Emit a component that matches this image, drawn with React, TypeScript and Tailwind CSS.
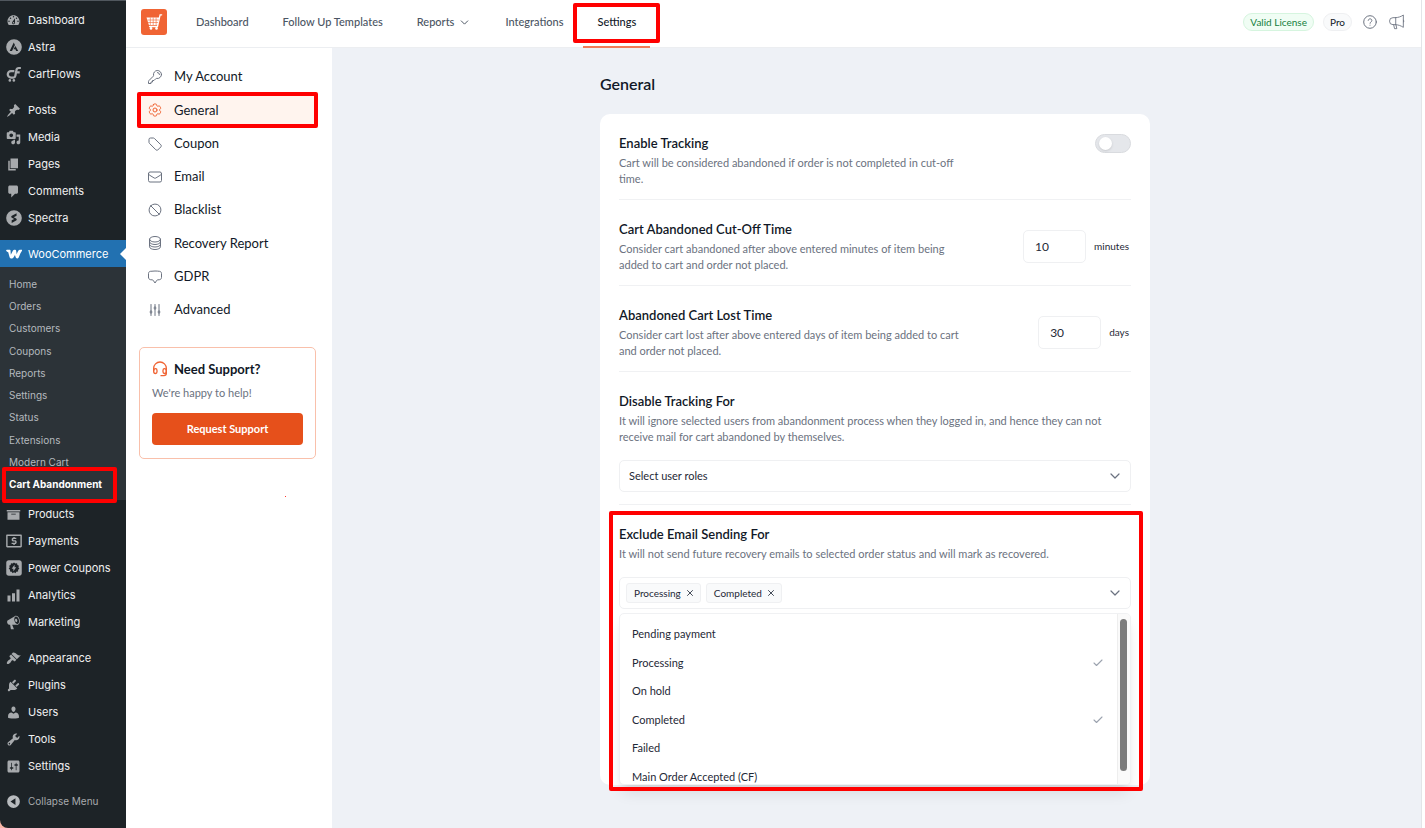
import { useState, type ReactNode } from "react";
import clsx from "clsx";
import { Check, ChevronDown, X } from "lucide-react";
import {
  HiOutlineAdjustmentsVertical,
  HiOutlineChatBubbleBottomCenter,
  HiOutlineCircleStack,
  HiOutlineCog6Tooth,
  HiOutlineEnvelope,
  HiOutlineKey,
  HiOutlineNoSymbol,
} from "react-icons/hi2";

const ICONS: Record<string, ReactNode> = {
  dashboard: (
    <path
      fillRule="evenodd"
      d="M3.76 16h12.48c1.1-1.37 1.76-3.11 1.76-5 0-4.42-3.58-8-8-8s-8 3.58-8 8c0 1.89.66 3.63 1.76 5zM10 4c.55 0 1 .45 1 1s-.45 1-1 1-1-.45-1-1 .45-1 1-1zM6 6c.55 0 1 .45 1 1s-.45 1-1 1-1-.45-1-1 .45-1 1-1zm8 0c.55 0 1 .45 1 1s-.45 1-1 1-1-.45-1-1 .45-1 1-1zm-5.37 5.55L12 7v6c0 1.1-.9 2-2 2s-2-.9-2-2c0-.57.24-1.08.63-1.45zM4 10c.55 0 1 .45 1 1s-.45 1-1 1-1-.45-1-1 .45-1 1-1zm12 0c.55 0 1 .45 1 1s-.45 1-1 1-1-.45-1-1 .45-1 1-1zm-5 3c0-.55-.45-1-1-1s-1 .45-1 1 .45 1 1 1 1-.45 1-1z"
    />
  ),
  astra: (
    <path
      fillRule="evenodd"
      d="M10 .2a9.8 9.8 0 1 0 0 19.6A9.8 9.8 0 0 0 10 .2zM9.7 4.4l1.5 3-3.7 7.6H4.6zM11.8 8.6l3.5 6.4h-2.6l-1-2.1H9.3z"
    />
  ),
  cartflows: (
    <>
      <path
        fill="none"
        stroke="currentColor"
        strokeWidth="2.8"
        d="M10.5 6.4H6.2a4 4 0 0 0 0 8h3c1.500 0 2.200-.7 2.500-2.200L13 5.300c.3-1.900 1.300-2.800 3-2.800h2.600M12.500 8h4.600"
      />
      <circle cx="4.800" cy="18" r="1.600" />
      <circle cx="9.800" cy="18" r="1.600" />
    </>
  ),
  posts: (
    <path d="M10.44 3.02l1.82-1.82 6.36 6.35-1.83 1.82c-1.05-.68-2.48-.57-3.41.36l-.75.75c-.92.93-1.04 2.35-.35 3.41l-1.83 1.82-2.41-2.41-2.8 2.79c-.42.42-3.38 2.71-3.8 2.29s1.86-3.39 2.28-3.81l2.79-2.79L4.1 9.36l1.83-1.82c1.05.69 2.48.57 3.4-.36l.75-.75c.93-.92 1.05-2.35.36-3.41z" />
  ),
  media: (
    <path
      fillRule="evenodd"
      d="M13 11V4c0-.55-.45-1-1-1h-1.67L9 1H5L3.67 3H2c-.55 0-1 .45-1 1v7c0 .55.45 1 1 1h10c.55 0 1-.45 1-1zM7 4.5c1.38 0 2.5 1.12 2.5 2.5S8.38 9.5 7 9.5 4.5 8.38 4.5 7 5.62 4.5 7 4.5zM14 6h5v10.5c0 1.38-1.12 2.5-2.5 2.5S14 17.88 14 16.5s1.12-2.5 2.5-2.5c.17 0 .34.02.5.05V9h-3V6zm-4 8.05V13h2v3.5c0 1.38-1.12 2.5-2.5 2.5S7 17.88 7 16.5 8.12 14 9.5 14c.17 0 .34.02.5.05z"
    />
  ),
  pages: <path d="M6 15V2h10v13H6zm-1 1h8v2H3V5h2v11z" />,
  comments: <path d="M5 2h9c1.1 0 2 .9 2 2v7c0 1.1-.9 2-2 2h-2l-5 5v-5H5c-1.1 0-2-.9-2-2V4c0-1.1.9-2 2-2z" />,
  spectra: (
    <path
      fillRule="evenodd"
      d="M10 .2a9.8 9.8 0 1 0 0 19.6A9.8 9.8 0 0 0 10 .2zM13.2 4.2v3.1L9.7 9.1l3 1.5c1 .6 1 1.9 0 2.5l-5.6 3v-3.2l3.2-1.7-3-1.5c-1-.6-1.1-2 0-2.6z"
    />
  ),
  woo: (
    <path d="M1.2 4.6h3.2c.9 0 1.3.5 1.3 1.3l.3 4.9 2.6-4.9c.5-.9 1-1.3 1.9-1.3h.9c.8 0 1.2.4 1.3 1.2l.6 4.4c.8-1.9 1.5-3.5 2.5-4.9.4-.5.8-.7 1.4-.7h2.300c.7 0 1 .6.6 1.2-1.900 2.700-3.100 5.500-4.100 8.400-.3.900-.8 1.300-1.700 1.300h-.5c-.9 0-1.400-.5-1.700-1.300l-.9-3-1.600 3c-.5.900-1 1.300-1.900 1.300H6.100c-.9 0-1.400-.5-1.600-1.300L2.800 7.800C1.800 7.500.9 7 .4 6.100-.1 5.300.3 4.600 1.200 4.600z" />
  ),
  products: <path fillRule="evenodd" d="M19 4v2H1V4h18zM2 7h16v10H2V7zm11 3V9H7v1h6z" />,
  payments: (
    <path
      fillRule="evenodd"
      d="M1.5 2h17c.8 0 1.300.5 1.300 1.300v13.400c0 .8-.5 1.300-1.300 1.300h-17C.7 18 .2 17.500.2 16.700V3.300C.2 2.500.7 2 1.500 2zM2 3.800v12.400h16V3.800zM9.200 5h1.700v1h2v1.600H9.100v1.500h2.300c1.200 0 1.900.7 1.900 1.900v1c0 1.100-.7 1.900-1.900 1.900h-.5v1H9.200v-1H7v-1.600h4.400v-1.600H9c-1.200 0-1.900-.7-1.900-1.800V7.800c0-1.100.8-1.800 1.900-1.800h.2z"
    />
  ),
  powerCoupons: (
    <path
      fillRule="evenodd"
      d="M3.500.3h13c1.900 0 3.200 1.300 3.200 3.200v13c0 1.900-1.300 3.200-3.200 3.200h-13c-1.900 0-3.200-1.300-3.200-3.200v-13C.3 1.600 1.600.3 3.500.3zM10 3L8.300 4.300l-2.100-.2-.4 2.100-1.900 1L4.700 9.100 3.400 11l1.700 1.300-.1 2.200 2.100.2 1.200 1.800L10 15.300l1.800 1.200 1.100-1.800 2.200-.2v-2.200l1.600-1.400-1.200-1.800.7-2-1.900-.9-.5-2.100-2.100.2zM10.700 6v3h2.100l-3.600 5v-3.200H7.100z"
    />
  ),
  analytics: <path d="M18 18V2h-4v16h4zm-6 0V7H8v11h4zm-6 0v-8H2v8h4z" />,
  marketing: (
    <path
      fillRule="evenodd"
      d="M18.15 5.94c.46 1.62.38 3.22-.02 4.48-.42 1.28-1.26 2.18-2.3 2.48-.16.06-.26.06-.4.06-.06.02-.12.02-.18.02-.06.02-.14.02-.22.02h-6.8l2.22 5.5c.02.14-.06.26-.14.34-.08.1-.24.16-.34.16H6.95c-.1 0-.26-.06-.34-.16-.08-.08-.16-.2-.14-.34l-1-5.5H4.25l-.02-.02c-.5.06-1.08-.18-1.54-.62s-.88-1.08-1.06-1.88c-.24-.8-.2-1.56-.02-2.2.18-.62.58-1.08 1.06-1.3l.02-.02 9-5.4c.1-.06.18-.1.24-.16.06-.04.14-.08.24-.12.16-.08.28-.12.5-.18 1.04-.3 2.24.1 3.22.98s1.84 2.24 2.26 3.86zm-2.58 5.98h-.02c.4-.1.74-.34 1.04-.7.58-.7.86-1.76.86-3.04 0-.64-.1-1.3-.28-1.98-.34-1.36-1.02-2.5-1.78-3.24s-1.68-1.1-2.46-.88c-.82.22-1.4.96-1.7 2-.32 1.04-.28 2.36.06 3.72.38 1.36 1 2.5 1.8 3.24.78.74 1.62 1.1 2.48.88zm-2.54-7.08c.22-.04.42-.02.62.04.38.16.76.48 1.02 1s.42 1.2.42 1.78c0 .3-.04.56-.12.8-.18.48-.44.84-.86.94-.34.1-.8-.06-1.14-.4s-.64-.86-.78-1.5c-.18-.62-.12-1.24.02-1.72s.48-.84.82-.94z"
    />
  ),
  appearance: (
    <path d="M14.48 11.06L7.41 3.99l1.5-1.5c.5-.56 2.3-.47 3.51.32 1.21.8 1.43 1.28 2.91 2.1 1.18.64 2.45 1.26 4.45.85zm-.71.71L6.7 4.7 4.93 6.47c-.39.39-.39 1.02 0 1.41l1.06 1.06c.39.39.39 1.03 0 1.42-.6.6-1.43 1.11-2.21 1.69-.35.26-.7.53-1.01.84C1.43 14.23.4 16.08 1.4 17.07c.99 1 2.84-.03 4.18-1.36.31-.31.58-.66.85-1.02.57-.78 1.08-1.61 1.69-2.21.39-.39 1.02-.39 1.41 0l1.06 1.06c.39.39 1.02.39 1.41 0z" />
  ),
  plugins: (
    <path d="M13.11 4.36L9.87 7.6 8 5.73l3.24-3.24c.35-.34 1.05-.2 1.56.32.52.51.66 1.21.31 1.55zm-8 1.77l.91-1.12 9.01 9.01-1.19.84c-.71.71-2.63 1.16-3.82 1.16H6.14L4.9 17.26c-.59.59-1.54.59-2.12 0-.59-.58-.59-1.53 0-2.12l1.24-1.24v-3.88c0-1.13.4-3.19 1.09-3.89zm7.26 3.97l3.24-3.24c.34-.35 1.04-.21 1.55.31.52.51.66 1.21.31 1.55l-3.24 3.25z" />
  ),
  users: (
    <path d="M10 9.25c-2.27 0-2.73-3.44-2.73-3.44C7 4.02 7.82 2 9.97 2c2.16 0 2.98 2.02 2.71 3.81 0 0-.41 3.44-2.68 3.44zm0 2.57L12.72 10c2.39 0 4.52 2.33 4.52 4.53v2.49s-3.65 1.13-7.24 1.13c-3.65 0-7.24-1.13-7.24-1.13v-2.49c0-2.25 1.94-4.48 4.47-4.48z" />
  ),
  tools: (
    <path
      fillRule="evenodd"
      d="M16.68 9.77c-1.34 1.34-3.3 1.67-4.95.99l-5.41 6.52c-.99.99-2.59.99-3.58 0s-.99-2.59 0-3.57l6.52-5.42c-.68-1.65-.35-3.61.99-4.95 1.28-1.28 3.12-1.62 4.72-1.06l-2.89 2.89 2.82 2.82 2.86-2.87c.53 1.58.18 3.39-1.08 4.65zM3.81 16.21c.4.39 1.04.39 1.43 0 .4-.4.4-1.04 0-1.43-.39-.4-1.03-.4-1.43 0-.39.39-.39 1.03 0 1.43z"
    />
  ),
  settings: (
    <path
      fillRule="evenodd"
      d="M18 16V4c0-1.1-.9-2-2-2H4c-1.1 0-2 .9-2 2v12c0 1.1.9 2 2 2h12c1.1 0 2-.9 2-2zM8 11h1c.55 0 1 .45 1 1s-.45 1-1 1H8v1.5c0 .28-.22.5-.5.5s-.5-.22-.5-.5V13H6c-.55 0-1-.45-1-1s.45-1 1-1h1V5.5c0-.28.22-.5.5-.5s.5.22.5.5V11zm5-2h-1c-.55 0-1-.45-1-1s.45-1 1-1h1V5.5c0-.28.22-.5.5-.5s.5.22.5.5V7h1c.55 0 1 .45 1 1s-.45 1-1 1h-1v5.5c0 .28-.22.5-.5.5s-.5-.22-.5-.5V9z"
    />
  ),
  collapse: (
    <path fillRule="evenodd" d="M10 1.500a8.500 8.500 0 1 0 0 17 8.500 8.500 0 0 0 0-17zM12.600 5.500v9L6 10z" />
  ),
};

// Plugin logos are drawn edge to edge, core icons keep their own margin.
const LARGE_ICONS = ["astra", "cartflows", "spectra", "woo", "payments", "powerCoupons"];

const ADMIN_TOP = [
  [
    ["Dashboard", "dashboard"],
    ["Astra", "astra"],
    ["CartFlows", "cartflows"],
  ],
  [
    ["Posts", "posts"],
    ["Media", "media"],
    ["Pages", "pages"],
    ["Comments", "comments"],
    ["Spectra", "spectra"],
  ],
];

const WOO_SUBMENU = [
  "Home",
  "Orders",
  "Customers",
  "Coupons",
  "Reports",
  "Settings",
  "Status",
  "Extensions",
  "Modern Cart",
  "Cart Abandonment",
];

const ADMIN_BOTTOM = [
  [
    ["Products", "products"],
    ["Payments", "payments"],
    ["Power Coupons", "powerCoupons"],
    ["Analytics", "analytics"],
    ["Marketing", "marketing"],
  ],
  [
    ["Appearance", "appearance"],
    ["Plugins", "plugins"],
    ["Users", "users"],
    ["Tools", "tools"],
    ["Settings", "settings"],
  ],
];

const SETTINGS_TABS = [
  { label: "My Account", icon: HiOutlineKey },
  { label: "General", icon: HiOutlineCog6Tooth },
  { label: "Coupon", icon: TagIcon },
  { label: "Email", icon: HiOutlineEnvelope },
  { label: "Blacklist", icon: HiOutlineNoSymbol },
  { label: "Recovery Report", icon: HiOutlineCircleStack },
  { label: "GDPR", icon: HiOutlineChatBubbleBottomCenter },
  { label: "Advanced", icon: HiOutlineAdjustmentsVertical },
];

const ORDER_STATUSES = [
  "Pending payment",
  "Processing",
  "On hold",
  "Completed",
  "Failed",
  "Main Order Accepted (CF)",
];

function TagIcon({ className }: { className?: string }) {
  return (
    <svg viewBox="0 0 24 24" fill="none" stroke="currentColor" strokeWidth={1.5} strokeLinejoin="round" className={className}>
      <path d="M9.5 3H5.2A2.2 2.2 0 0 0 3 5.200v4.300c0 .6.2 1.200.7 1.600l9.600 9.600c.7.7 1.800.9 2.600.3a18 18 0 0 0 5.200-5.200c.5-.8.4-1.900-.3-2.600l-9.700-9.500A2.200 2.200 0 0 0 9.500 3z" />
    </svg>
  );
}

function HeadsetIcon() {
  return (
    <svg viewBox="0 0 24 24" fill="none" stroke="currentColor" strokeWidth={2} strokeLinecap="round" strokeLinejoin="round" className="size-4 text-[#f06434]">
      <path d="M2.5 14.5V11a9.5 9.5 0 0 1 19 0v7.500c0 2.200-1.300 3.500-3.500 3.500h-4.500" />
      <path d="M2.5 14.8c0-2 1-3.300 2.700-3.300 1.600 0 2.300 1 2.300 2.600v2c0 1.500-.8 2.600-2.300 2.600-1.700 0-2.700-1.400-2.700-3.400zM21.500 14.800c0-2-1-3.300-2.700-3.300-1.600 0-2.300 1-2.300 2.600v2c0 1.500.8 2.600 2.300 2.600 1.700 0 2.700-1.400 2.700-3.400z" />
    </svg>
  );
}

function CartLogo() {
  return (
    <svg viewBox="0 0 26 26" className="size-[26px] rounded-[3px] bg-[#f06434]" aria-label="Cart Abandonment Recovery">
      <path d="M5.500 8.500h13l-1.800 7.500H7.900z" fill="#fff" />
      <path d="M20.700 5.800h-1.600l-2.600 11.700H8.500" fill="none" stroke="#fff" strokeWidth={1.3} strokeLinecap="round" />
      <path d="M6.500 11h11.300M7 13.500h10.200M9.300 8.500V16M12.200 8.500V16M15.100 8.500V16" stroke="#f06434" strokeWidth={0.6} />
      <circle cx="10" cy="19.400" r="1.300" fill="#fff" />
      <circle cx="15.500" cy="19.400" r="1.300" fill="#fff" />
    </svg>
  );
}

function HelpIcon() {
  return (
    <svg viewBox="0 0 24 24" fill="none" stroke="currentColor" strokeWidth={1.7} strokeLinecap="round" strokeLinejoin="round" className="size-[14px]">
      <circle cx="12" cy="12" r="10.800" />
      <path d="M9 9.200c.3-1.700 1.500-2.600 3.100-2.600 1.800 0 3.100 1.100 3.100 2.800 0 2.400-3.100 2.500-3.100 4.800M12 17.400v.1" />
    </svg>
  );
}

function MegaphoneIcon() {
  return (
    <svg viewBox="0 0 24 24" fill="none" stroke="currentColor" strokeWidth={1.3} strokeLinecap="round" strokeLinejoin="round" className="size-4">
      <path d="M9.500 5.500H6a5 5 0 0 0 0 10.500h3.500zM9.500 5.500C14 5.400 18 4 21.500 1.500V20c-3.500-2.300-7.500-4-12-4M21.500 9c1.200.7 1.200 2.600 0 3.300M7 16l1.300 6h3.400l-1.200-5.800" />
    </svg>
  );
}

/** Red frame drawn around the control the guide points at. */
function Highlight({ className }: { className: string }) {
  return <span aria-hidden className={clsx("pointer-events-none absolute z-20 rounded-[2px] border-4 border-[#ff0000]", className)} />;
}

function AdminLink({ label, icon, active }: { label: string; icon: string; active?: boolean }) {
  return (
    <a
      href="#"
      className={clsx(
        "relative flex h-[27px] items-center gap-[6px] pt-px pl-[5px] text-[11px] whitespace-nowrap",
        active ? "bg-[#2271b1] text-white" : "text-[#f0f0f1]",
      )}
    >
      <span className="flex w-[17px] justify-center">
        <svg
          viewBox="0 0 20 20"
          fill="currentColor"
          className={clsx(
            LARGE_ICONS.includes(icon) ? "size-4" : "size-[15px]",
            active ? "text-white" : "text-[#a7aaad]",
          )}
        >
          {ICONS[icon]}
        </svg>
      </span>
      {label}
      {active && (
        <span className="absolute top-1/2 right-0 -translate-y-1/2 border-y-[6px] border-r-[6px] border-y-transparent border-r-white" />
      )}
    </a>
  );
}

function AdminGroups({ groups }: { groups: string[][][] }) {
  return groups.map((group, i) => (
    <div key={i} className="mb-[9px]">
      {group.map(([label, icon]) => (
        <AdminLink key={label} label={label} icon={icon} />
      ))}
    </div>
  ));
}

function AdminSidebar() {
  return (
    <div className="w-[126px] shrink-0 bg-[#f6b5a5]">
      <nav className="h-full rounded-bl-lg border-t border-[#50575e] bg-[#1d2327] pt-[5px]">
        <AdminGroups groups={ADMIN_TOP} />
        <AdminLink label="WooCommerce" icon="woo" active />
        <ul className="flex h-[233px] flex-col bg-[#2c3338] pt-[6px] pb-1">
          {WOO_SUBMENU.map((label) => {
            const current = label === "Cart Abandonment";
            return (
              <li key={label} className="relative flex flex-1 items-center pl-[9px]">
                <a
                  href="#"
                  className={clsx(
                    "text-[10px] whitespace-nowrap",
                    current ? "font-bold text-white" : "text-[#b4b9be]",
                  )}
                >
                  {label}
                </a>
                {current && <Highlight className="inset-y-[-7px] right-[9px] left-[2px]" />}
              </li>
            );
          })}
        </ul>
        <AdminGroups groups={ADMIN_BOTTOM} />
        <button type="button" className="flex h-[27px] items-center gap-[6px] pl-[5px] text-[10px] text-[#a7aaad]">
          <span className="flex w-[17px] justify-center">
            <svg viewBox="0 0 20 20" fill="currentColor" className="size-[15px] text-[#b8bbbe]">
              {ICONS.collapse}
            </svg>
          </span>
          Collapse Menu
        </button>
      </nav>
    </div>
  );
}

function TopBar() {
  return (
    <header className="flex h-12 items-center border-b border-[#eceef1] bg-white pr-4 pb-[3px] pl-[15px]">
      <CartLogo />
      <nav className="ml-[29px] flex items-center gap-[34px] text-[11px] leading-4 font-medium text-[#4b5563]">
        <a href="#">Dashboard</a>
        <a href="#">Follow Up Templates</a>
        <a href="#" className="flex items-center gap-1">
          Reports
          <ChevronDown className="size-[13px]" strokeWidth={1.8} />
        </a>
        <a href="#">Integrations</a>
        <a href="#" className="relative text-[#111827]">
          Settings
          <span className="absolute inset-x-[-14px] top-8 h-[2px] bg-[#f27a58]" />
          <Highlight className="inset-x-[-24px] top-[-11px] bottom-[-13px]" />
        </a>
      </nav>
      <div className="ml-auto flex items-center text-[#6b7280]">
        <span className="mr-[9px] rounded-full border border-[#d6f5df] bg-[#f0fdf4] px-[6px] text-[10px] leading-4 text-[#15803d]">
          Valid License
        </span>
        <span className="mr-[11px] rounded-full border border-[#eff0f2] bg-[#f9fafb] px-[6px] text-[10px] leading-4 text-[#111827]">
          Pro
        </span>
        <button type="button" aria-label="Help" className="mr-3">
          <HelpIcon />
        </button>
        <button type="button" aria-label="What's new">
          <MegaphoneIcon />
        </button>
      </div>
    </header>
  );
}

function SettingsNav() {
  return (
    <aside className="w-[206px] shrink-0 bg-white pt-[14px] pr-4 pl-[13px]">
      <nav className="flex h-[263px] flex-col justify-between">
        {SETTINGS_TABS.map(({ label, icon: Icon }) => {
          const active = label === "General";
          return (
            <a
              key={label}
              href="#"
              className={clsx(
                "relative flex h-[30px] items-center gap-[11px] pl-2 text-[13px] text-[#111827]",
                active && "bg-[#fff4ee]",
              )}
            >
              <Icon className={clsx("size-4", active ? "text-[#f06434]" : "text-[#6b7280]")} />
              {label}
              {active && <Highlight className="inset-x-[-2px] inset-y-[-3px]" />}
            </a>
          );
        })}
      </nav>
      <section className="mt-[22px] rounded-[5px] border border-[#f9c0ab] px-3 pt-[11px] pb-[13px]">
        <h2 className="flex items-center gap-[6px] text-[13px] leading-5 font-bold text-[#111827]">
          <HeadsetIcon />
          Need Support?
        </h2>
        <p className="mt-[6px] text-[11px] leading-4 text-[#6b7280]">We're happy to help!</p>
        <button type="button" className="mt-3 h-8 w-full rounded-[4px] bg-[#e6501b] text-[11px] font-bold text-white">
          Request Support
        </button>
      </section>
      <span aria-hidden className="mt-[37px] ml-[146px] block size-px bg-[#ff3b30]" />
    </aside>
  );
}

interface SettingProps {
  title: string;
  description: string;
  narrow?: boolean;
  control?: ReactNode;
  children?: ReactNode;
  last?: boolean;
}

function Setting({ title, description, narrow, control, children, last }: SettingProps) {
  return (
    <section className={clsx("relative pt-5", !last && "border-b border-[#f0f1f3] pb-3")}>
      <div className="flex justify-between">
        <div className={clsx(narrow && "w-[354px]")}>
          <h3 className="text-[13px] leading-[18px] font-semibold text-[#111827]">{title}</h3>
          <p className="mt-[3px] text-[11px] leading-4 text-[#6b7280]">{description}</p>
        </div>
        {control}
      </div>
      {children}
    </section>
  );
}

function NumberField({ label, unit, value }: { label: string; unit: string; value: number }) {
  return (
    <label className="mt-[10px] flex items-center gap-2 self-start text-[10px] text-[#1f2937]">
      <input
        type="text"
        inputMode="numeric"
        aria-label={label}
        defaultValue={value}
        className="h-[33px] w-[63px] rounded-[5px] border border-[#eff0f2] px-[11px] text-[12px]"
      />
      <span className="pr-[2px]">{unit}</span>
    </label>
  );
}

function GeneralSettings() {
  const [selected, setSelected] = useState(["Processing", "Completed"]);

  const toggle = (status: string) =>
    setSelected((prev) => (prev.includes(status) ? prev.filter((s) => s !== status) : [...prev, status]));

  return (
    <main className="min-w-0 flex-1 bg-[#eef1f6] px-4 pt-[26px]">
      <div className="mx-auto max-w-[553px] pr-[3px]">
        <h1 className="text-[16px] leading-5 font-semibold text-[#111827]">General</h1>
        <div className="mt-5 rounded-[10px] bg-white px-[19px] pb-[176px]">
          <Setting
            title="Enable Tracking"
            description="Cart will be considered abandoned if order is not completed in cut-off time."
            narrow
            control={
              <input
                type="checkbox"
                role="switch"
                aria-label="Enable Tracking"
                className="h-[19px] w-9 appearance-none rounded-full border border-[#d9dbdf] bg-[#e5e7eb] before:mt-[2px] before:ml-[3px] before:block before:size-[13px] before:rounded-full before:bg-white before:shadow-sm checked:bg-[#f06434] checked:before:ml-[18px]"
              />
            }
          />
          <Setting
            title="Cart Abandoned Cut-Off Time"
            description="Consider cart abandoned after above entered minutes of item being added to cart and order not placed."
            narrow
            control={<NumberField label="Cart Abandoned Cut-Off Time" unit="minutes" value={10} />}
          />
          <Setting
            title="Abandoned Cart Lost Time"
            description="Consider cart lost after above entered days of item being added to cart and order not placed."
            narrow
            control={<NumberField label="Abandoned Cart Lost Time" unit="days" value={30} />}
          />
          <Setting
            title="Disable Tracking For"
            description="It will ignore selected users from abandonment process when they logged in, and hence they can not receive mail for cart abandoned by themselves."
          >
            <div className="relative mt-[15px]">
              <select
                aria-label="Disable Tracking For"
                className="block h-8 w-full appearance-none rounded-[5px] border border-[#eff0f2] bg-white px-[9px] text-[11px] text-[#1f2937]"
              >
                <option>Select user roles</option>
              </select>
              <ChevronDown className="pointer-events-none absolute top-2 right-2 size-4 text-[#6b7280]" strokeWidth={1.8} />
            </div>
          </Setting>
          <Setting
            title="Exclude Email Sending For"
            description="It will not send future recovery emails to selected order status and will mark as recovered."
            last
          >
            <div className="relative mt-[15px]">
              <div className="flex h-8 items-center gap-[5px] rounded-[5px] border border-[#eff0f2] pr-[7px] pl-[6px]">
                {selected.map((status) => (
                  <span
                    key={status}
                    className="flex h-5 items-center gap-1 rounded-[3px] border border-[#eff0f2] bg-[#f9fafb] pr-[5px] pl-[7px] text-[10px] text-[#1f2937]"
                  >
                    {status}
                    <button type="button" aria-label={`Remove ${status}`} onClick={() => toggle(status)}>
                      <X className="size-[10px]" strokeWidth={2} />
                    </button>
                  </span>
                ))}
                <ChevronDown className="ml-auto size-4 text-[#6b7280]" strokeWidth={1.8} />
              </div>
              <div className="absolute inset-x-0 top-full z-10 mt-1 h-[172px] overflow-hidden rounded-[5px] border border-[#f0f1f3] bg-white pt-[6px] shadow-lg">
                <ul role="listbox" aria-label="Order status" className="mr-[13px] flex h-[171px] flex-col">
                  {ORDER_STATUSES.map((status) => (
                    <li
                      key={status}
                      role="option"
                      aria-selected={selected.includes(status)}
                      onClick={() => toggle(status)}
                      className="flex flex-1 items-center justify-between pr-[13px] pl-3 text-[11px] text-[#1f2937]"
                    >
                      {status}
                      {selected.includes(status) && <Check className="size-3 text-[#9ca3af]" strokeWidth={2.2} />}
                    </li>
                  ))}
                </ul>
                <div className="absolute inset-y-0 right-0 w-[13px] border-l border-[#eeeeee] bg-[#fafafa] pt-[5px] pl-[2px]">
                  <div className="h-[152px] w-[7px] rounded-full bg-[#7c7c7c]" />
                </div>
              </div>
              <Highlight className="top-[-66px] right-[-12px] bottom-[-182px] left-[-10px]" />
            </div>
          </Setting>
        </div>
      </div>
    </main>
  );
}

export default function App() {
  return (
    <div className="flex min-h-screen bg-white font-[Inter,'Liberation_Sans',sans-serif]">
      <AdminSidebar />
      <div className="mr-[3px] flex min-w-0 flex-1 flex-col border-r border-[#e3e5e8] font-[Lato,Inter,sans-serif]">
        <TopBar />
        <div className="flex flex-1">
          <SettingsNav />
          <GeneralSettings />
        </div>
      </div>
    </div>
  );
}
